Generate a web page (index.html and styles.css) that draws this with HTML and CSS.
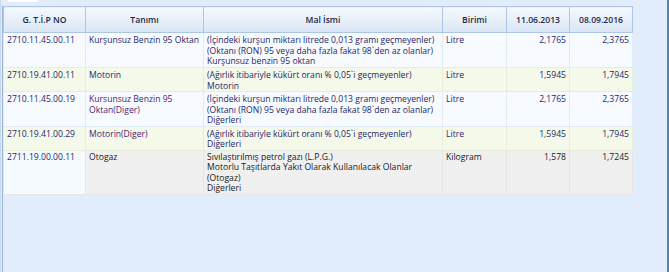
FILE: index.html
```html
<!DOCTYPE html>
<html>
<head>
<meta charset="utf-8">
<link rel="stylesheet" href="styles.css">
</head>
<body>
<div class="window">
  <div class="topband"><div class="tab"></div></div>
  <div class="content">
    <table class="grid">
      <colgroup>
        <col class="c1"><col class="c2"><col class="c3"><col class="c4"><col class="c5"><col class="c6">
      </colgroup>
      <thead>
        <tr>
          <th>G. T.İ.P NO</th>
          <th>Tanımı</th>
          <th>Mal İsmi</th>
          <th>Birimi</th>
          <th>11.06.2013</th>
          <th>08.09.2016</th>
        </tr>
      </thead>
      <tbody>
        <tr class="r-white h35">
          <td>2710.11.45.00.11</td>
          <td>Kurşunsuz Benzin 95 Oktan</td>
          <td>(İçindeki kurşun miktarı litrede 0,013 gramı geçmeyenler)<br>(Oktanı (RON) 95 veya daha fazla fakat 98`den az olanlar)<br>Kurşunsuz benzin 95 oktan</td>
          <td>Litre</td>
          <td class="num">2,1765</td>
          <td class="num">2,3765</td>
        </tr>
        <tr class="r-green h24">
          <td>2710.19.41.00.11</td>
          <td>Motorin</td>
          <td>(Ağırlık itibariyle kükürt oranı % 0,05`i geçmeyenler)<br>Motorin</td>
          <td>Litre</td>
          <td class="num">1,5945</td>
          <td class="num">1,7945</td>
        </tr>
        <tr class="r-white h34">
          <td>2710.11.45.00.19</td>
          <td class="purple">Kursunsuz Benzin 95 Oktan(Diger)</td>
          <td>(İçindeki kurşun miktarı litrede 0,013 gramı geçmeyenler)<br>(Oktanı (RON) 95 veya daha fazla fakat 98`den az olanlar)<br>Diğerleri</td>
          <td>Litre</td>
          <td class="num">2,1765</td>
          <td class="num">2,3765</td>
        </tr>
        <tr class="r-green h24">
          <td>2710.19.41.00.29</td>
          <td class="purple">Motorin(Diger)</td>
          <td>(Ağırlık itibariyle kükürt oranı % 0,05`i geçmeyenler)<br>Diğerleri</td>
          <td>Litre</td>
          <td class="num">1,5945</td>
          <td class="num">1,7945</td>
        </tr>
        <tr class="r-gray h44">
          <td class="first">2711.19.00.00.11</td>
          <td>Otogaz</td>
          <td>Sıvılaştırılmış petrol gazı (L.P.G.)<br>Motorlu Taşıtlarda Yakıt Olarak Kullanılacak Olanlar<br>(Otogaz)<br>Diğerleri</td>
          <td>Kilogram</td>
          <td class="num">1,578</td>
          <td class="num">1,7245</td>
        </tr>
      </tbody>
    </table>
  </div>
</div>
</body>
</html>
```
FILE: styles.css
```css
html, body {
  margin: 0;
  padding: 0;
}
body {
  width: 669px;
  height: 272px;
  overflow: hidden;
  background: #e2edfb;
  font-family: "Open Sans", sans-serif;
  font-size: 8.6px;
}
.window {
  width: 669px;
  height: 272px;
  box-sizing: border-box;
  border-left: 1px solid #c9d9ee;
  border-right: 2px solid #5a80b8;
  background: #e2edfb;
  display: flex;
  flex-direction: column;
}
.topband {
  height: 6px;
  padding-left: 7px;
}
.tab {
  width: 30px;
  height: 2px;
  background: #ffffff;
}
.content {
  border-left: 1px solid #9bb6da;
  margin-left: 1px;
  flex: 1;
}
.grid {
  border-collapse: collapse;
  table-layout: fixed;
  width: 630px;
}
.c1 { width: 82px; }
.c2 { width: 118px; }
.c3 { width: 239px; }
.c4 { width: 64px; }
.c5 { width: 63px; }
.c6 { width: 63px; }
.grid th {
  height: 26px;
  box-sizing: border-box;
  padding: 0;
  border: 1px solid #aec6e6;
  background: linear-gradient(#f5f9fe, #e7eff9 50%, #dae6f6);
  color: #1b2a4a;
  font-weight: 600;
  font-size: 8.6px;
  text-align: center;
}
.grid td {
  vertical-align: top;
  padding: 2px 3px 0 3px;
  line-height: 10.5px;
  border: 1px solid #e1ecf8;
  color: #1f1f6b;
  white-space: nowrap;
  overflow: hidden;
}
.grid td:nth-child(2) {
  white-space: normal;
}
.grid td.num {
  text-align: right;
}
.r-white td { background: #f7fbff; }
.r-green td { background: #f4f9ea; border-color: #e6eedb; }
.r-gray td { background: #f0f0f0; color: #1a1a1a; border-color: #e6e6e6; padding-top: 1px; }
.r-gray td.first { background: #f5faff; color: #1f1f6b; }
.grid td.purple { color: #4b2372; }
.h35 { height: 35px; }
.h34 { height: 34px; }
.h24 { height: 24px; }
.h44 { height: 44px; }
```
